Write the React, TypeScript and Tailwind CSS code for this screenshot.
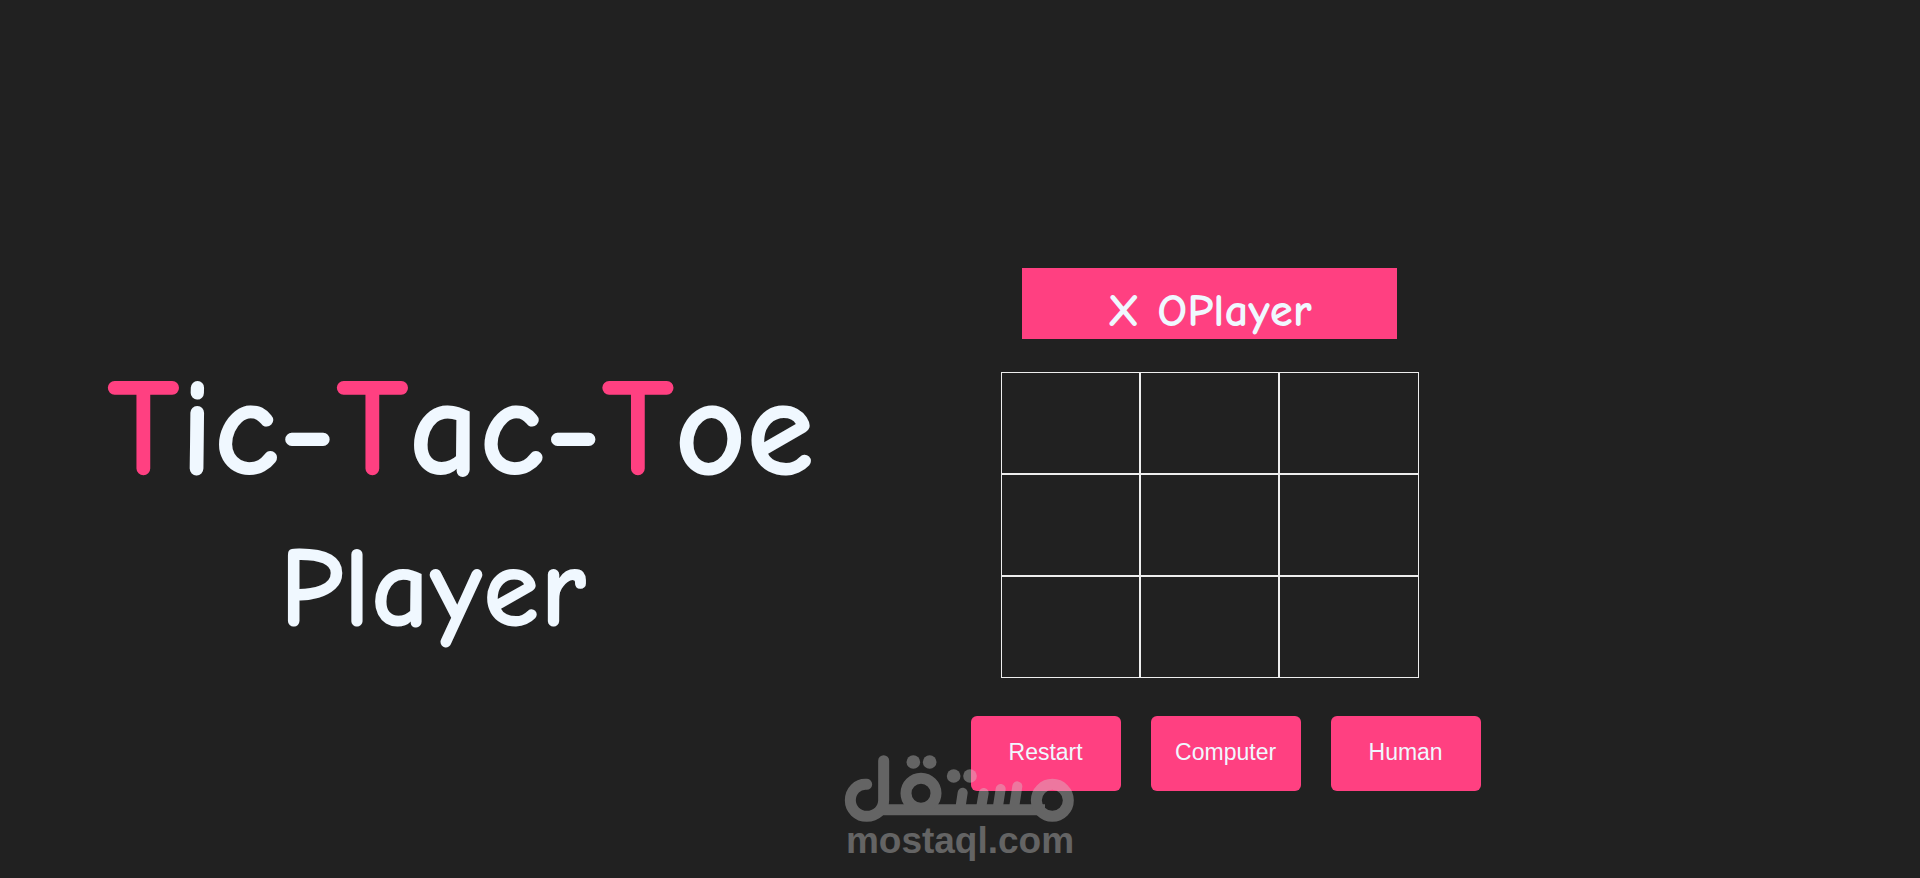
const cells = Array.from({ length: 9 }, (_, i) => i);
const actions = ["Restart", "Computer", "Human"];

function Watermark() {
  return (
    <div className="pointer-events-none absolute bottom-0 left-1/2 flex h-[138px] w-[260px] -translate-x-1/2 flex-col items-center text-[#d1d1d1] opacity-[0.38]">
      <svg viewBox="0 0 780 252" className="h-[84px] w-full shrink-0" fill="none" stroke="currentColor" strokeWidth="33" strokeLinecap="round" aria-label="مستقل">
        <path d="M110 133C82 131 61 153 61 181C61 208 83 229 110 229C139 229 161 208 161 181V62" />
        <path strokeLinecap="butt" d="M148 209H645" />
        <circle cx="273" cy="160" r="45" />
        <circle cx="667" cy="181" r="48" />
        <path strokeWidth="30" d="M398 158L391 205M461 159L453 205M512 147L503 205M562 139L552 205" />
        <g fill="currentColor" stroke="none">
          <circle cx="250" cy="66" r="20.5" />
          <circle cx="299" cy="66" r="20.5" />
          <circle cx="371" cy="108" r="20.5" />
          <circle cx="420" cy="108" r="20.5" />
        </g>
      </svg>
      <span className="font-['Liberation_Sans',Arial,sans-serif] text-[37px] leading-[34px] font-bold">mostaql.com</span>
    </div>
  );
}

export default function App() {
  return (
    <main className="relative flex min-h-screen items-start bg-[#212121] font-['Comic_Sans_MS','Comic_Neue',Inter,sans-serif] font-bold text-[#f0f8ff] [font-kerning:none]">
      <header className="w-[48%] pt-[349px] text-center">
        <h1 className="text-[139px] leading-[160px] whitespace-nowrap">
          <span className="text-[#ff4081]">T</span>ic-<span className="text-[#ff4081]">T</span>ac-<span className="text-[#ff4081]">T</span>oe
        </h1>
        <p className="pr-14 text-[116px] leading-[160px]">Player</p>
      </header>

      <section className="flex w-[30%] flex-col items-center pt-[268px]">
        <h2 className="h-[71px] w-[375px] bg-[#ff4081] pt-[11px] text-center text-[47px] leading-[64px]">X OPlayer</h2>
        <div className="mt-[33px] grid w-[418px] grid-cols-3">
          {cells.map((i) => (
            <button
              key={i}
              type="button"
              aria-label={`Cell ${i + 1}`}
              className="h-[102px] border border-[#eee]"
            />
          ))}
        </div>
        <div className="mt-[38px] flex gap-[30px] pl-8">
          {actions.map((label) => (
            <button
              key={label}
              type="button"
              className="h-[75px] w-[150px] rounded-md bg-[#ff4081] pb-0.5 font-['Liberation_Sans',Arial,sans-serif] text-[23px] font-normal"
            >
              {label}
            </button>
          ))}
        </div>
      </section>

      <Watermark />
    </main>
  );
}
